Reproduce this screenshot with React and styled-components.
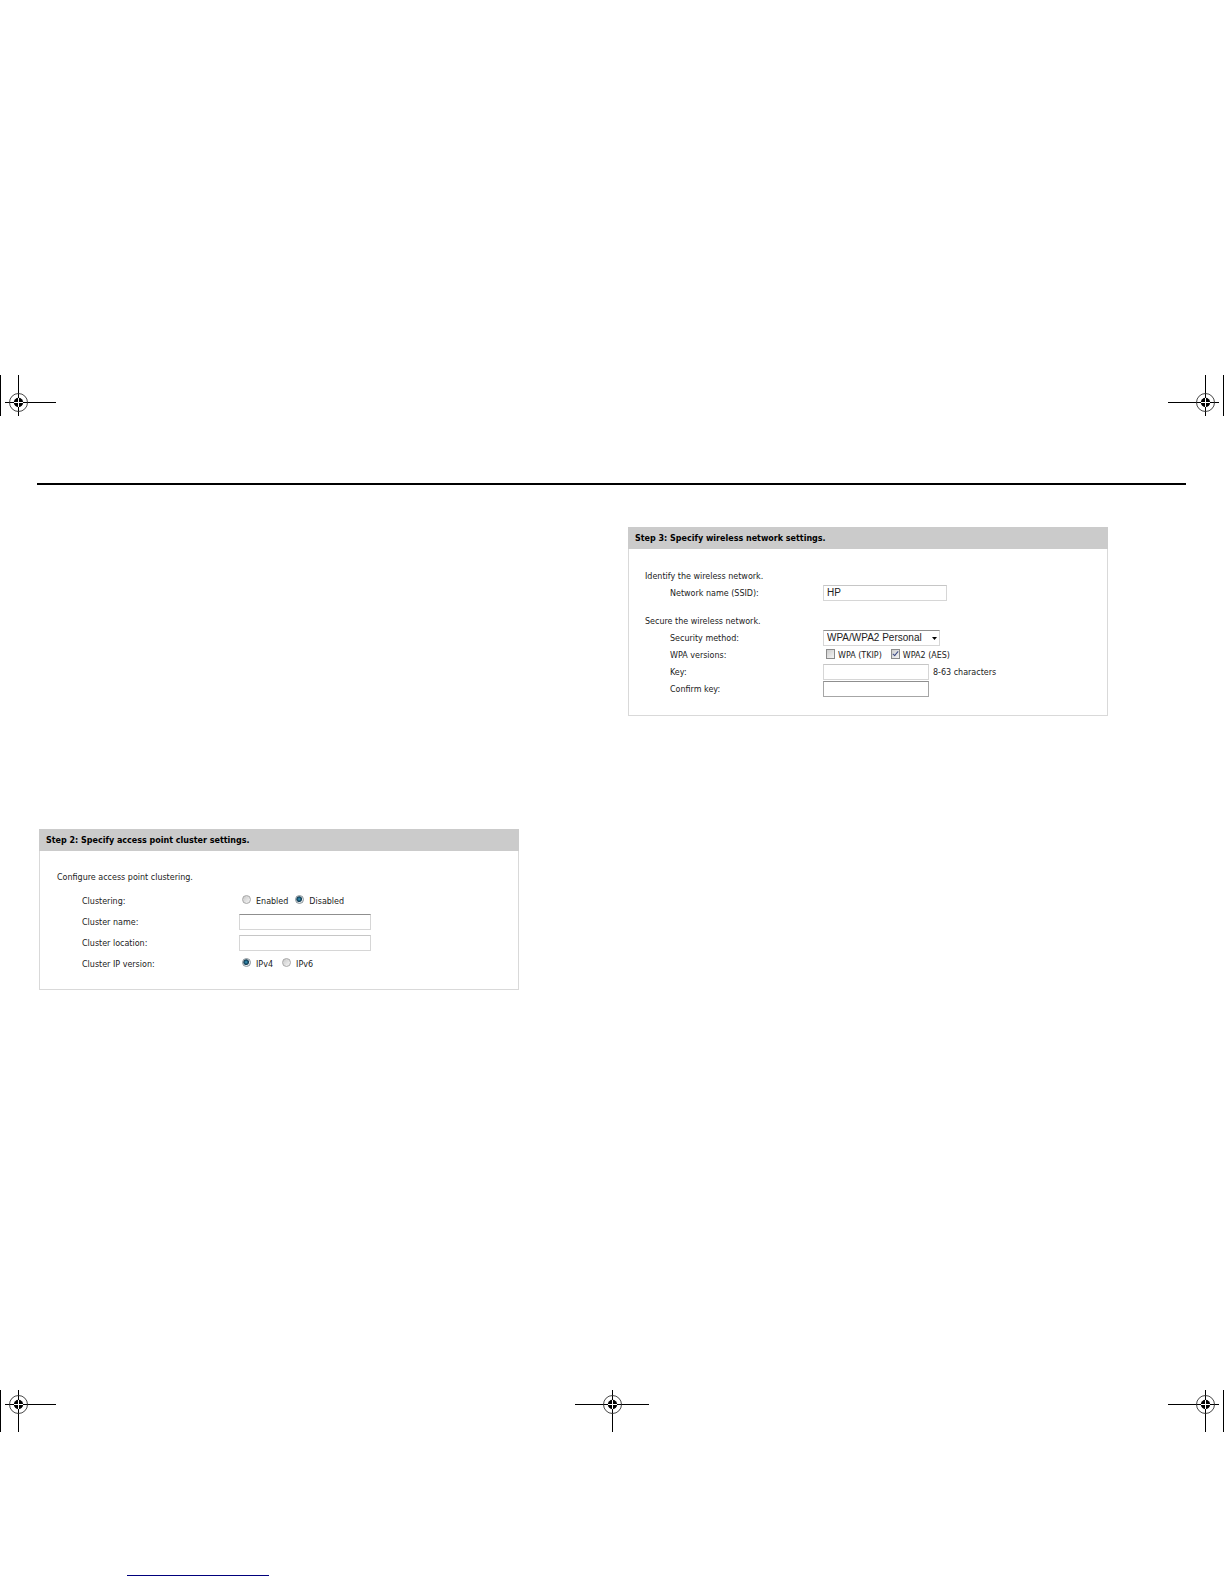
import React from "react";
import styled, { createGlobalStyle, css } from "styled-components";

const GlobalStyle = createGlobalStyle`
  *, *::before, *::after { box-sizing: border-box; }
  body {
    margin: 0;
    background: #fff;
    color: #222;
    font: 8px/12px "DejaVu Sans", Verdana, sans-serif;
  }
`;

const Page = styled.div`
  display: flex;
  flex-direction: column;
  min-height: 100vh;
  padding-top: 375px;
`;

const MarkRow = styled.div`
  display: flex;
  justify-content: space-between;
  height: 42px;
`;

const MarkDrawing = styled.svg`
  display: block;
  height: 42px;
  width: ${(p) => p.$width}px;
  flex: none;
  transform: ${(p) => (p.$flip ? "scaleX(-1)" : "none")};
`;

const Sheet = styled.main`
  flex: 1;
  margin: 66px 38px 0 37px;
  border-top: 2px solid #000;
`;

const Columns = styled.div`
  display: grid;
  grid-template-columns: 1fr 1fr;
  column-gap: 31px;
  padding: 42px 0 0 2px;
`;

const Column = styled.div`
  padding-top: ${(p) => p.$top || 0}px;
`;

const Panel = styled.section`
  max-width: 480px;
  border: 1px solid #d9d9d9;
  border-top: 0;
`;

const PanelTitle = styled.h2`
  margin: 0 -1px;
  padding: 2px 7px 0;
  background: #cbcbcb;
  color: #000;
  font-size: 8px;
  font-weight: bold;
  line-height: 20px;
`;

const PanelBody = styled.form`
  display: grid;
  gap: 11px;
  padding: ${(p) => p.$padding};
`;

const Group = styled.fieldset`
  display: grid;
  grid-auto-rows: ${(p) => p.$row}px;
  min-width: 0;
  margin: 0;
  padding: 0;
  border: 0;
`;

const GroupTitle = styled.legend`
  height: ${(p) => p.$height}px;
  padding: 4px 0 0;
`;

const Row = styled.div`
  display: grid;
  grid-template-columns: ${(p) => p.$label}px 1fr;
  align-items: center;
  padding-left: 25px;
`;

const labelText = css`
  padding-top: 2px;
`;

const FieldLabel = styled.label`
  ${labelText}
`;

const FieldCaption = styled.span`
  ${labelText}
`;

const Controls = styled.div`
  display: flex;
  align-items: center;
  gap: ${(p) => p.$gap}px;
`;

const boxed = css`
  height: 16px;
  border: 1px solid ${(p) => (p.$dark ? "#a6a6a6" : "#d6d6d6")};
  border-top-color: ${(p) => (p.$dark || p.$darkTop ? "#8f8f8f" : "#c6c6c6")};
  border-radius: 0;
  background: #fff;
  color: #222;
  font: 10px/14px "Liberation Sans", Arial, sans-serif;
  outline: none;
`;

const TextBox = styled.input`
  ${boxed}
  width: ${(p) => p.$width}px;
  padding: 0 3px;
`;

const SelectWrap = styled.span`
  position: relative;
  display: flex;
`;

const Select = styled.select`
  ${boxed}
  width: 117px;
  padding: 0 14px 0 3px;
  appearance: none;
`;

const Arrow = styled.svg`
  position: absolute;
  right: 3px;
  top: 7px;
  width: 5px;
  height: 3px;
  pointer-events: none;
`;

const Choice = styled.label`
  display: flex;
  align-items: center;
  gap: ${(p) => p.$gap}px;
  padding: 2px 0 0 3px;
`;

const Radio = styled.input`
  appearance: none;
  width: 9px;
  height: 9px;
  margin: 0 0 4px;
  border: 1px solid #a8a8a8;
  border-radius: 50%;
  background: linear-gradient(135deg, #c9c9c9, #f6f6f6);
  &:checked {
    border-color: #8a949a;
    background: radial-gradient(circle at 45% 45%, #3fa0c4 0, #15506e 32%, #1d4357 45%, #e6ecef 62%);
  }
`;

const Tick = styled.input`
  appearance: none;
  display: grid;
  width: 9px;
  height: 10px;
  margin: 0 0 4px;
  border: 1px solid #8b8b8b;
  background: linear-gradient(135deg, #cdcdcd, #f4f4f4);
  &:checked::after {
    content: "";
    width: 3px;
    height: 6px;
    margin: 0 0 0 2px;
    border: solid #3c4a86;
    border-width: 0 1px 1px 0;
    transform: rotate(40deg);
  }
`;

const Footer = styled.footer`
  height: 152px;
  padding: 143px 0 0 127px;
`;

const FooterLine = styled.div`
  width: 142px;
  border-top: 1px solid #00007c;
`;

function Target({ x, y }) {
  return (
    <>
      <circle cx={x} cy={y} r="9" fill="none" stroke="#333" strokeWidth="0.9" />
      <circle cx={x} cy={y} r="4.7" fill="#000" />
      <path d={`M${x - 4.5} ${y}h9M${x} ${y - 4.5}v9`} stroke="#fff" strokeWidth="1" />
    </>
  );
}

function CornerMark({ flip, y, length }) {
  return (
    <MarkDrawing $width={56} $flip={flip} viewBox="0 0 56 42" aria-hidden="true">
      <path d={`M.5 0V${length}M18.5 0V${length}M5 ${y}H56`} stroke="#000" fill="none" />
      <Target x={18.5} y={y} />
    </MarkDrawing>
  );
}

function CenterMark() {
  return (
    <MarkDrawing $width={74} viewBox="0 0 74 42" aria-hidden="true">
      <path d="M37.5 0V42M0 14.5H74" stroke="#000" fill="none" />
      <Target x={37.5} y={14.5} />
    </MarkDrawing>
  );
}

function Field({ label, id, labelWidth, gap = 4, children }) {
  return (
    <Row $label={labelWidth}>
      {id ? <FieldLabel htmlFor={id}>{label}</FieldLabel> : <FieldCaption>{label}</FieldCaption>}
      <Controls $gap={gap}>{children}</Controls>
    </Row>
  );
}

function RadioChoice({ name, label, checked }) {
  return (
    <Choice $gap={5}>
      <Radio type="radio" name={name} defaultChecked={checked} />
      {label}
    </Choice>
  );
}

function TickChoice({ label, checked }) {
  return (
    <Choice $gap={3}>
      <Tick type="checkbox" defaultChecked={checked} />
      {label}
    </Choice>
  );
}

function ClusterPanel() {
  return (
    <Panel>
      <PanelTitle>Step 2: Specify access point cluster settings.</PanelTitle>
      <PanelBody $padding="17px 17px 15px">
        <Group $row={21}>
          <GroupTitle $height={22}>Configure access point clustering.</GroupTitle>
          <Field label="Clustering:" labelWidth={157}>
            <RadioChoice name="clustering" label="Enabled" />
            <RadioChoice name="clustering" label="Disabled" checked />
          </Field>
          <Field label="Cluster name:" id="cluster-name" labelWidth={157}>
            <TextBox id="cluster-name" type="text" $width={132} $darkTop />
          </Field>
          <Field label="Cluster location:" id="cluster-location" labelWidth={157}>
            <TextBox id="cluster-location" type="text" $width={132} />
          </Field>
          <Field label="Cluster IP version:" labelWidth={157} gap={6}>
            <RadioChoice name="ip-version" label="IPv4" checked />
            <RadioChoice name="ip-version" label="IPv6" />
          </Field>
        </Group>
      </PanelBody>
    </Panel>
  );
}

function WirelessPanel() {
  return (
    <Panel>
      <PanelTitle>Step 3: Specify wireless network settings.</PanelTitle>
      <PanelBody $padding="18px 16px">
        <Group $row={17}>
          <GroupTitle $height={17}>Identify the wireless network.</GroupTitle>
          <Field label="Network name (SSID):" id="ssid" labelWidth={153}>
            <TextBox id="ssid" type="text" defaultValue="HP" $width={124} />
          </Field>
        </Group>
        <Group $row={17}>
          <GroupTitle $height={17}>Secure the wireless network.</GroupTitle>
          <Field label="Security method:" id="security" labelWidth={153}>
            <SelectWrap>
              <Select id="security" $darkTop>
                <option>WPA/WPA2 Personal</option>
              </Select>
              <Arrow viewBox="0 0 5 3" aria-hidden="true">
                <path d="M0 0h5L2.5 3z" />
              </Arrow>
            </SelectWrap>
          </Field>
          <Field label="WPA versions:" labelWidth={153} gap={6}>
            <TickChoice label="WPA (TKIP)" />
            <TickChoice label="WPA2 (AES)" checked />
          </Field>
          <Field label="Key:" id="key" labelWidth={153}>
            <TextBox id="key" type="password" $width={106} />
            <FieldCaption>8-63 characters</FieldCaption>
          </Field>
          <Field label="Confirm key:" id="confirm-key" labelWidth={153}>
            <TextBox id="confirm-key" type="password" $width={106} $dark />
          </Field>
        </Group>
      </PanelBody>
    </Panel>
  );
}

export default function App() {
  return (
    <Page>
      <GlobalStyle />
      <MarkRow>
        <CornerMark y={27.5} length={41} />
        <CornerMark y={27.5} length={41} flip />
      </MarkRow>
      <Sheet>
        <Columns>
          <Column $top={302}>
            <ClusterPanel />
          </Column>
          <Column>
            <WirelessPanel />
          </Column>
        </Columns>
      </Sheet>
      <MarkRow>
        <CornerMark y={14.5} length={42} />
        <CenterMark />
        <CornerMark y={14.5} length={42} flip />
      </MarkRow>
      <Footer>
        <FooterLine />
      </Footer>
    </Page>
  );
}
